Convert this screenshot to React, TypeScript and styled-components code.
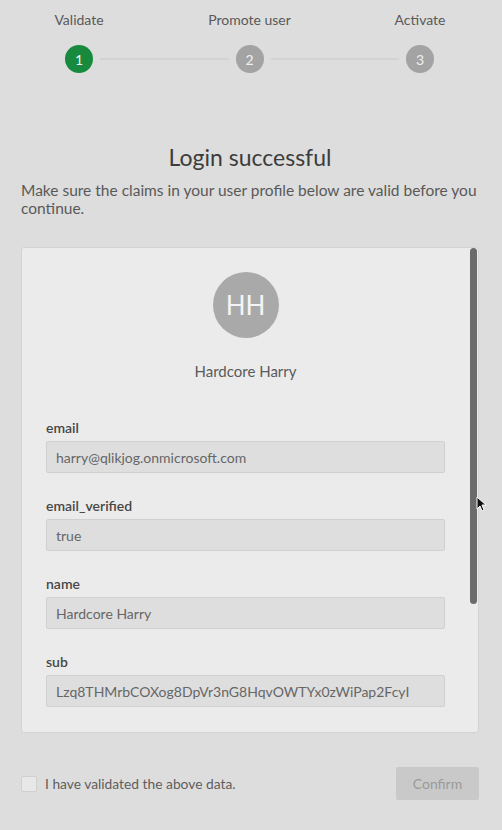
import React from "react";
import styled, { createGlobalStyle } from "styled-components";

const Global = createGlobalStyle`
  html, body { margin: 0; padding: 0; background: #dddddd; }
  body { font-family: "Lato", "Open Sans", sans-serif; color: #404040; }
  * { box-sizing: border-box; }
`;

const Page = styled.div`
  position: relative;
  width: 502px;
  height: 830px;
  background: #dddddd;
  padding: 10px 23px 0 21px;
  display: flex;
  flex-direction: column;
`;

const Stepper = styled.div`
  display: flex;
  align-items: flex-end;
  padding: 0 45px 0 44px;
`;

const Step = styled.div`
  width: 28px;
  display: flex;
  flex-direction: column;
  align-items: center;
`;

const StepLabel = styled.div`
  white-space: nowrap;
  font-size: 14px;
  line-height: 20px;
  color: #595959;
`;

const StepCircle = styled.div<{ $active?: boolean }>`
  margin-top: 15px;
  width: 28px;
  height: 28px;
  border-radius: 50%;
  background: ${(p) => (p.$active ? "#178a3e" : "#a3a3a3")};
  color: #f0f0f0;
  font-size: 14px;
  display: flex;
  align-items: center;
  justify-content: center;
`;

const Connector = styled.div`
  flex: 1;
  height: 2px;
  margin: 0 7px 13px 7px;
  background: #d2d2d2;
`;

const Title = styled.h1`
  margin: 69px 0 0 0;
  text-align: center;
  font-weight: 400;
  font-size: 23px;
  line-height: 30px;
  color: #3c3c3c;
`;

const Intro = styled.p`
  margin: 9px 0 0 0;
  font-size: 15.5px;
  line-height: 18px;
  color: #595959;
`;

const Card = styled.div`
  position: relative;
  margin-top: 30px;
  height: 486px;
  background: #ebebeb;
  border: 1px solid #d3d3d3;
  border-radius: 3px;
  overflow: hidden;
  padding: 24px 33px 0 24px;
  display: flex;
  flex-direction: column;
`;

const ScrollThumb = styled.div`
  position: absolute;
  top: 0;
  right: 1px;
  width: 7px;
  height: 356px;
  border-radius: 4px;
  background: #6b6b6b;
`;

const Avatar = styled.div`
  align-self: center;
  width: 66px;
  height: 66px;
  border-radius: 50%;
  background: #a9a9a9;
  color: #f4f4f4;
  font-size: 26px;
  display: flex;
  align-items: center;
  justify-content: center;
`;

const DisplayName = styled.div`
  margin-top: 23px;
  text-align: center;
  font-size: 15px;
  line-height: 20px;
  color: #5a5a5a;
`;

const Fields = styled.div`
  margin-top: 38px;
  display: flex;
  flex-direction: column;
  gap: 24px;
`;

const Field = styled.div`
  display: flex;
  flex-direction: column;
  gap: 4px;
`;

const FieldLabel = styled.div`
  font-size: 14px;
  line-height: 18px;
  font-weight: 600;
  color: #474747;
`;

const FieldValue = styled.div`
  height: 32px;
  background: #dedede;
  border: 1px solid #d0d0d0;
  border-radius: 2px;
  padding: 0 9px;
  display: flex;
  align-items: center;
  font-size: 14px;
  color: #666666;
`;

const Footer = styled.div`
  margin-top: 34px;
  display: flex;
  align-items: center;
  justify-content: space-between;
`;

const CheckRow = styled.label`
  display: flex;
  align-items: center;
  gap: 8px;
  font-size: 13.8px;
  color: #5e5e5e;
`;

const CheckBox = styled.span`
  width: 16px;
  height: 16px;
  border: 1px solid #cfcfcf;
  border-radius: 2px;
  background: #e8e8e8;
`;

const ConfirmButton = styled.button`
  width: 83px;
  height: 33px;
  border: none;
  border-radius: 2px;
  background: #c9c9c9;
  color: #9a9a9a;
  font-family: inherit;
  font-size: 14px;
`;

const Cursor = styled.svg`
  position: absolute;
  left: 476px;
  top: 496px;
`;

const claims = [
  { key: "email", value: "harry@qlikjog.onmicrosoft.com" },
  { key: "email_verified", value: "true" },
  { key: "name", value: "Hardcore Harry" },
  { key: "sub", value: "Lzq8THMrbCOXog8DpVr3nG8HqvOWTYx0zWiPap2FcyI" },
];

export default function App() {
  return (
    <>
      <Global />
      <Page>
        <Stepper>
          <Step>
            <StepLabel>Validate</StepLabel>
            <StepCircle $active>1</StepCircle>
          </Step>
          <Connector />
          <Step>
            <StepLabel>Promote user</StepLabel>
            <StepCircle>2</StepCircle>
          </Step>
          <Connector />
          <Step>
            <StepLabel>Activate</StepLabel>
            <StepCircle>3</StepCircle>
          </Step>
        </Stepper>
        <Title>Login successful</Title>
        <Intro>
          Make sure the claims in your user profile below are valid before you
          continue.
        </Intro>
        <Card>
          <ScrollThumb />
          <Avatar>HH</Avatar>
          <DisplayName>Hardcore Harry</DisplayName>
          <Fields>
            {claims.map((c) => (
              <Field key={c.key}>
                <FieldLabel>{c.key}</FieldLabel>
                <FieldValue>{c.value}</FieldValue>
              </Field>
            ))}
          </Fields>
        </Card>
        <Footer>
          <CheckRow>
            <CheckBox />
            I have validated the above data.
          </CheckRow>
          <ConfirmButton disabled>Confirm</ConfirmButton>
        </Footer>
        <Cursor width="10" height="16" viewBox="0 0 10 16">
          <path d="M1 1 L1 13 L4 10 L6 15 L8 14 L6 9 L10 9 Z" fill="#111" stroke="#fff" strokeWidth="1" />
        </Cursor>
      </Page>
    </>
  );
}
